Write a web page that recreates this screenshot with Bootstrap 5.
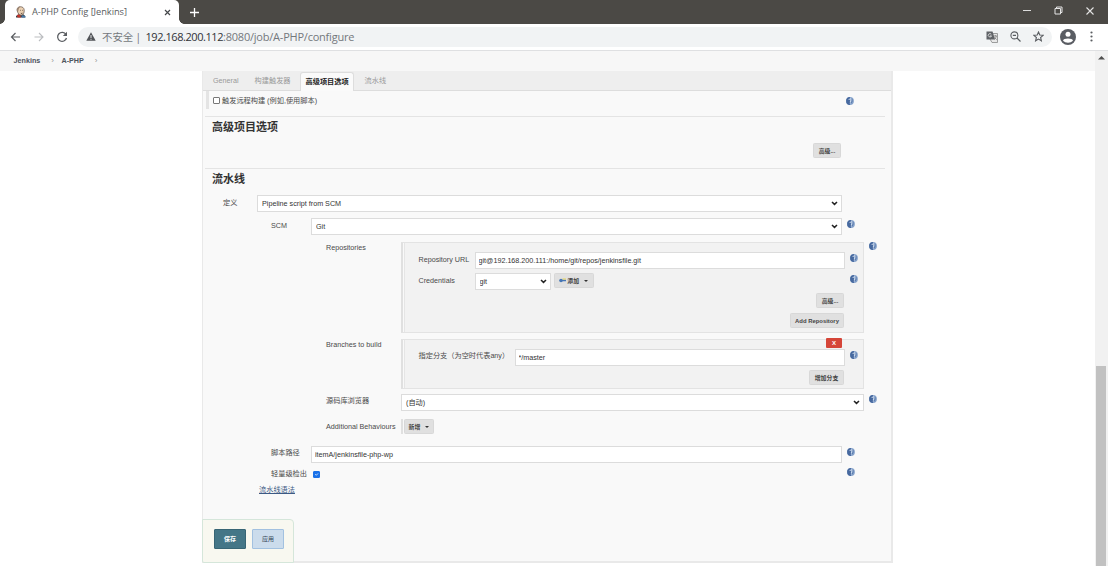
<!DOCTYPE html>
<html lang="zh-CN">
<head>
<meta charset="utf-8">
<title>A-PHP Config [Jenkins]</title>
<link href="https://cdn.jsdelivr.net/npm/bootstrap@5.3.0/dist/css/bootstrap.min.css" rel="stylesheet">
<style>
body{width:1108px;height:566px;overflow:hidden;background:#fff;color:#4a4a4a;font:7.2px/10px "Liberation Sans","Noto Sans CJK SC",sans-serif}
svg{display:block;flex:none}
.titlebar{height:24px;background:#4b4945}
.tab-page{width:174px;height:24px;margin-left:5px;background:#fff;border-radius:5px 5px 0 0;position:relative;padding:0 8px 0 10px}
.tab-page::before,.tab-page::after{content:"";position:absolute;bottom:0;width:5px;height:5px}
.tab-page::before{left:-5px;background:radial-gradient(circle at 0 0,transparent 4.5px,#fff 5px)}
.tab-page::after{right:-5px;background:radial-gradient(circle at 100% 0,transparent 4.5px,#fff 5px)}
.ui{font-family:"Open Sans","Noto Sans CJK SC",sans-serif;white-space:nowrap}
.tab-title{font-size:9.3px;letter-spacing:-.06px;color:#5a5d61;margin-left:6px;width:130px}
.winbtns{gap:23px;margin-right:14px;padding-bottom:3px}
.toolbar-row{height:27px;border-bottom:1px solid #dfe0e2;padding:0 14px 1px 10px}
.omnibox{height:20px;border-radius:10px;background:#f1f3f4;margin-left:10px;width:974px;padding:0 8px}
.addr{font-size:11px;letter-spacing:-.22px;color:#74787c}
.addr b{font-weight:400;color:#303236;letter-spacing:-.44px}
.crumbs{height:20px;background:#f7f7f7;padding-left:13.5px;font-weight:700;color:#4d545d;width:1095px}
.crumbs i{font-style:normal;color:#999;font-weight:400;font-size:8px}
.scroller{width:13px;background:#f1f1f1;position:relative}
.thumb{position:absolute;left:1px;top:315px;width:10px;height:200px;background:#c1c1c1}
.panel{width:691px;height:492px;margin-left:202px;background:#f9f9f9;border:solid #e9e9e9;border-width:0 2px 2px 1px}
.tabbar{height:20px;background:#eee;border-bottom:1px solid #ddd;color:#999;padding-left:10px}
.tabbar span{padding-top:5px;white-space:nowrap}
.tabbar .on{width:54px;height:19px;margin-top:1px;padding:4px 0 0 5px;background:#fafafa;border:1px solid #ddd;border-bottom:0;border-radius:3px 3px 0 0;color:#222;font-weight:700}
.rule{border-bottom:1px solid #e4e4e4;margin:0 6px 0 2px}
.trigger{height:26px}
.trigger .mark-bar{width:3px;height:18px;background:#e4e4e4;margin-left:1px}
.head{font-size:11px;line-height:21px;font-weight:700;color:#333;padding-left:7px}
.lbl{padding-top:3px;white-space:nowrap;flex:none}
.fld,.fld:focus{height:17px;min-height:0;padding:0 3px 1px;font:7.2px/12px "Liberation Sans","Noto Sans CJK SC",sans-serif;border:1px solid #dcdcdc;border-radius:0;background-color:#fff;color:#333;box-shadow:none;flex:none}
.fld.pick{padding:1px 3px 0 4px;background-image:url("data:image/svg+xml,%3Csvg xmlns='http://www.w3.org/2000/svg' viewBox='0 0 7 5'%3E%3Cpath d='M1 1l2.5 2.4L6 1' fill='none' stroke='%23222' stroke-width='1.5'/%3E%3C/svg%3E");background-size:7px 5px;background-position:right 3px center}
.help{margin:2px 0 0 5px}
.chip{height:15px;padding:0;border:1px solid #d8d8d8;border-radius:1.5px;background:#e0e0e0;color:#444;font-size:5.9px;line-height:12px;font-weight:700;display:inline-flex;align-items:center;justify-content:center;flex:none;white-space:nowrap}
.caret{border:solid transparent;border-width:2px 2px 0;border-top-color:#333}
.block{width:463px;background:#f2f2f2;border:1px solid #e3e3e3;border-left:2px solid #e0e0e0;box-shadow:inset 1px 0 #f9f9f9,inset 2px 0 #e5e5e5;position:relative;flex:none;padding-left:15.5px}
.block .help{margin-left:5px}
.tick{width:7px;height:7px;min-height:0;margin:0;border:1px solid #777;flex:none;vertical-align:top}
.tick.form-check-input[type=checkbox]{border-radius:1px}
.tick:checked{background-color:#1b72e8;border-color:#1b72e8}
.del{position:absolute;right:21px;top:-2px;width:16px;height:10px;background:#d54538;color:#fff;font:700 6px/10px "Liberation Sans",sans-serif;text-align:center;border:0;padding:0;border-radius:1px}
.stickybar{width:92px;height:44px;margin-left:-1px;background:#f8f8f0;border:1.5px solid #d5e6da;border-radius:0 4px 0 2px;padding:9px 0 0 11px;gap:6px}
.stickybar .btn{width:32px;height:20px;padding:0;font-size:6px;line-height:17px;font-weight:700;border-radius:1px}
.save{background:#447687;border:1px solid #376575;color:#fff}
.stickybar .apply{background:#cbdcec;border:1px solid #a2c1e0;color:#345;font-weight:400}
</style>
</head>
<body class="d-flex flex-column">
<svg width="0" height="0" class="position-absolute"><defs>
<symbol id="q" viewBox="0 0 8 8"><circle cx="4" cy="4" r="3.9" fill="#86a3cb"/><path d="M4 .1a3.9 3.9 0 0 0 0 7.8z" fill="#47699f"/><path d="M3 3c0-1.600 2.500-1.400 2.300 0C5.200 3.800 4.200 3.800 4.200 4.900" fill="none" stroke="#e9f0fa" stroke-width=".9"/><path d="M6 2v3L4.800 6.500" fill="none" stroke="#47699f" stroke-width=".7"/><circle cx="4.200" cy="6.100" r=".5" fill="#e9f0fa"/></symbol>
</defs></svg>

<header class="titlebar d-flex flex-none">
  <div class="tab-page d-flex align-items-center ui">
    <svg width="11" height="12" viewBox="0 0 11 12"><path d="M1 11.5V10l3-2h4l2.200 2v1.500z" fill="#35404a"/><path d="M2 9l3-1 1 3.500H2.500z" fill="#c4352b"/><path d="M7 9l3.500 1.200v1.300H6.500z" fill="#4677a5"/><path d="M2 4C2 0 8.800-.6 9.200 4c.2 3-1 5.200-3 5.200S2.800 7.600 2 4z" fill="#ecd2b4" stroke="#5b4b42" stroke-width=".7"/><path d="M2.300 5C1.200 2 3.500.3 5.500.6 3.800 1.600 3.600 3.500 3 6z" fill="#9a8370"/><path d="M5 4.300h.8M7.200 4.300H8M5.800 7.200q1 .5 1.700-.1" stroke="#4a3b33" stroke-width=".7"/></svg>
    <span class="tab-title">A-PHP Config [Jenkins]</span>
    <svg class="ms-auto" width="7" height="7" viewBox="0 0 7 7"><path d="M1 1l5 5M6 1L1 6" stroke="#45484b" stroke-width="1.200"/></svg>
  </div>
  <svg class="align-self-center" style="margin-left:11px" width="9" height="9" viewBox="0 0 9 9"><path d="M4.500 0v9M0 4.500h9" stroke="#fff" stroke-width="1.300"/></svg>
  <div class="winbtns ms-auto d-flex align-items-center">
    <svg width="8" height="8" viewBox="0 0 8 8"><path d="M0 3.500h8" stroke="#ddd"/></svg>
    <svg width="9" height="9" viewBox="0 0 9 9"><path d="M1 2.500h5.500V8H1zM2.500 2.500V1H8v5.500H6.500" fill="none" stroke="#e5e5e5"/></svg>
    <svg width="8" height="8" viewBox="0 0 8 8"><path d="M.5.5l7 7m0-7l-7 7" stroke="#e5e5e5" stroke-width="1.100"/></svg>
  </div>
</header>

<nav class="toolbar-row d-flex align-items-center ui">
  <svg width="11" height="10" viewBox="0 0 11 10"><path d="M10 5H2M5.500 1L1.500 5l4 4" fill="none" stroke="#5a5d61" stroke-width="1.200"/></svg>
  <svg style="margin-left:13px" width="10" height="10" viewBox="0 0 10 10"><path d="M.5 5H9M5 1l4 4-4 4" fill="none" stroke="#bbbdc0" stroke-width="1.100"/></svg>
  <svg style="margin-left:12px" width="12" height="12" viewBox="0 0 12 12"><path d="M10 3.500A4.500 4.500 0 1 0 10.500 7" fill="none" stroke="#5a5d61" stroke-width="1.300"/><path d="M11 .8v4.200H6.800z" fill="#5a5d61"/></svg>
  <div class="omnibox d-flex align-items-center">
    <svg width="10" height="9" viewBox="0 0 10 9"><path d="M5 .3L9.700 8.700H.3z" fill="#505357"/><path d="M5 3v3M5 6.800v1" stroke="#f1f3f4" stroke-width=".9"/></svg>
    <span class="addr" style="margin-left:6px;font-size:10.400px;letter-spacing:0">不安全</span>
    <span class="addr" style="margin-left:2px">|</span>
    <span class="addr" style="margin-left:4.500px"><b>192.168.200.112</b>:8080/job/A-PHP/configure</span>
    <svg class="ms-auto" width="12" height="12" viewBox="0 0 12 12"><path d="M4 2.500h7.500v9H6L4 8z" fill="#e8e8e8" stroke="#888" stroke-width=".8"/><path d="M.5.5h6l2.500 8H.5z" fill="#606367"/><path d="M5.300 3.200a1.700 1.700 0 1 0 .3 1.700H4" fill="none" stroke="#fff" stroke-width=".7"/><path d="M7.500 5h3.500M9.300 4v1M10.300 5c-.3 2-1.500 3-2 3.300M8.500 6.500l2.300 2.200" fill="none" stroke="#777" stroke-width=".7"/></svg>
    <svg style="margin-left:12px" width="11" height="11" viewBox="0 0 11 11"><circle cx="4.400" cy="4.400" r="3.500" fill="none" stroke="#5a5d61" stroke-width="1.100"/><path d="M7 7l3.500 3.500M2.800 4.400H6" stroke="#5a5d61" stroke-width="1.200"/></svg>
    <svg style="margin-left:12px" width="11" height="11" viewBox="0 0 11 11"><path d="M5.500 1l1.300 3 3.400.3-2.600 2.200.8 3.300-2.900-1.700-2.900 1.700.8-3.300L.8 4.300 4.200 4z" fill="none" stroke="#5a5d61" stroke-width="1.100"/></svg>
  </div>
  <svg style="margin-left:8px" width="16" height="16" viewBox="0 0 16 16"><circle cx="8" cy="8" r="8" fill="#5a5d63"/><circle cx="8" cy="5.300" r="2.500" fill="#fff"/><path d="M3 11.600C3 8.700 13 8.700 13 11.600 10.500 14.500 5.500 14.500 3 11.600z" fill="#fff"/></svg>
  <svg class="ms-auto" width="4" height="11" viewBox="0 0 4 11"><g fill="#5a5d61"><circle cx="1.500" cy="1.500" r="1.100"/><circle cx="1.500" cy="5.500" r="1.100"/><circle cx="1.500" cy="9.500" r="1.100"/></g></svg>
</nav>

<div class="d-flex flex-grow-1">
<main>
  <div class="crumbs d-flex align-items-center"><span>Jenkins</span><i style="margin:0 7.500px 0 11px">›</i><span>A-PHP</span><i style="margin-left:11px">›</i></div>
  <form class="panel">
    <div class="tabbar d-flex">
      <span>General</span><span style="margin-left:16px">构建触发器</span><span class="on" style="margin-left:9px">高级项目选项</span><span style="margin-left:11px">流水线</span>
    </div>
    <section class="rule trigger d-flex">
      <div class="mark-bar"></div>
      <input type="checkbox" class="form-check-input tick" style="margin:6px 2px 0 4px">
      <span style="padding-top:5px;width:624px">触发远程构建 (例如,使用脚本)</span>
      <svg class="help" style="margin:6px 0 0 0" width="8" height="8"><use href="#q"/></svg>
    </section>
    <section class="rule" style="height:52px">
      <div class="head">高级项目选项</div>
      <div class="d-flex justify-content-end" style="padding:5px 44px 0 0"><button type="button" class="btn chip" style="width:28px">高级...</button></div>
    </section>

    <div class="head" style="height:26px;padding-left:9px">流水线</div>
    <div class="d-flex" style="height:23px;padding-left:20px">
      <label class="lbl" style="width:34px">定义</label>
      <select class="form-select fld pick" style="width:585px"><option>Pipeline script from SCM</option></select>
    </div>
    <div class="d-flex" style="height:24px;padding-left:68px">
      <label class="lbl" style="width:40px">SCM</label>
      <select class="form-select fld pick" style="width:531px"><option>Git</option></select>
      <svg class="help" width="8" height="8"><use href="#q"/></svg>
    </div>
    <div class="d-flex" style="height:97px;padding-left:123px">
      <label class="lbl" style="width:75px;padding-top:1px">Repositories</label>
      <div class="block" style="height:91px;padding-top:9px">
        <div class="d-flex" style="height:21px">
          <label class="lbl" style="width:56px">Repository URL</label>
          <input class="form-control fld" style="width:370px" value="git@192.168.200.111:/home/git/repos/jenkinsfile.git">
          <svg class="help" width="8" height="8"><use href="#q"/></svg>
        </div>
        <div class="d-flex" style="height:20px">
          <label class="lbl" style="width:56px">Credentials</label>
          <select class="form-select fld pick" style="width:76px"><option>git</option></select>
          <button type="button" class="btn chip" style="width:40px;margin-left:3px"><svg width="7" height="5" viewBox="0 0 7 5"><path d="M2 2.500h5" stroke="#4676b5" stroke-width="1.500"/><circle cx="2" cy="2.500" r="1.800" fill="#4676b5"/><path d="M3.500 1H7" stroke="#e6d657"/></svg><span style="margin:0 5px 0 1.500px">添加</span><span class="caret"></span></button>
          <svg class="help" style="margin-left:256px" width="8" height="8"><use href="#q"/></svg>
        </div>
        <div class="d-flex flex-column align-items-end" style="padding-right:19px;gap:5px">
          <button type="button" class="btn chip" style="width:28px">高级...</button>
          <button type="button" class="btn chip" style="width:54px">Add Repository</button>
        </div>
      </div>
      <svg class="help" style="margin-top:0" width="8" height="8"><use href="#q"/></svg>
    </div>
    <div class="d-flex" style="height:55px;padding-left:123px">
      <label class="lbl" style="width:75px;padding-top:1px">Branches to build</label>
      <div class="block" style="height:50px;padding-top:9px">
        <button type="button" class="del">X</button>
        <div class="d-flex" style="height:21px">
          <label class="lbl" style="width:96px;padding-top:2px">指定分支（为空时代表any）</label>
          <input class="form-control fld" style="width:330px" value="*/master">
          <svg class="help" width="8" height="8"><use href="#q"/></svg>
        </div>
        <div class="d-flex justify-content-end" style="padding-right:19px"><button type="button" class="btn chip" style="width:35px">增加分支</button></div>
      </div>
    </div>
    <div class="d-flex" style="height:25px;padding-left:123px">
      <label class="lbl" style="width:75px;padding-top:2px">源码库浏览器</label>
      <select class="form-select fld pick" style="width:463px"><option>(自动)</option></select>
      <svg class="help" style="margin-top:1px" width="8" height="8"><use href="#q"/></svg>
    </div>
    <div class="d-flex" style="height:27px;padding-left:123px">
      <label class="lbl" style="width:75px">Additional Behaviours</label>
      <div style="width:2px;height:15px;background:#e0e0e0;margin-right:1px"></div>
      <button type="button" class="btn chip" style="width:30px"><span style="margin-right:5px">新增</span><span class="caret"></span></button>
    </div>
    <div class="d-flex" style="height:23px;padding-left:68px">
      <label class="lbl" style="width:40px;padding-top:2px">脚本路径</label>
      <input class="form-control fld" style="width:531px" value="itemA/jenkinsfile-php-wp">
      <svg class="help" width="8" height="8"><use href="#q"/></svg>
    </div>
    <div class="d-flex" style="height:16px;padding-left:68px">
      <label class="lbl" style="width:42px;padding-top:0">轻量级检出</label>
      <input type="checkbox" class="form-check-input tick" style="margin-top:2px" checked>
      <svg class="help" style="margin:-1px 0 0 527px" width="8" height="8"><use href="#q"/></svg>
    </div>
    <div style="height:34px;padding-left:56px"><a href="#" style="color:#3c5a85">流水线语法</a></div>
    <div class="stickybar d-flex"><button type="button" class="btn save">保存</button><button type="button" class="btn apply">应用</button></div>
  </form>
</main>
<aside class="scroller"><svg style="margin:4px 0 0 3px" width="7" height="5"><path d="M0 4.500L3.500 1 7 4.500z" fill="#505050"/></svg><div class="thumb"></div></aside>
</div>
<script src="https://cdn.jsdelivr.net/npm/bootstrap@5.3.0/dist/js/bootstrap.bundle.min.js"></script>
</body>
</html>
